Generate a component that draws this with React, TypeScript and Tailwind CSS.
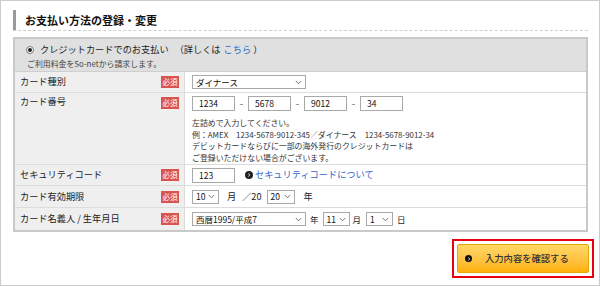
import { ReactNode } from 'react';

const Badge = () => (
  <span className="flex h-[12px] w-[18px] items-center justify-center bg-[#d9534f] text-[7.5px] leading-none text-white">
    必須
  </span>
);

const Chevron = () => (
  <svg width="7" height="5" viewBox="0 0 7 5" className="shrink-0">
    <path d="M0.8 1 L3.5 3.8 L6.2 1" fill="none" stroke="#666" strokeWidth="0.9" />
  </svg>
);

function Select({ value, w }: { value: string; w: string }) {
  return (
    <div className={`flex h-[14px] items-center justify-between border border-[#a9a9a9] bg-white pl-[3px] pr-[3px] text-[8.5px] leading-none text-[#111] ${w}`}>
      <span>{value}</span>
      <Chevron />
    </div>
  );
}

function Input({ value, w = 'w-[43px]' }: { value: string; w?: string }) {
  return (
    <div className={`flex h-[15px] items-center border border-[#a9a9a9] bg-white pl-[6px] text-[8.5px] leading-none text-[#111] ${w}`}>
      {value}
    </div>
  );
}

function Row({
  label,
  h,
  top,
  last,
  children,
}: {
  label: string;
  h: string;
  top?: boolean;
  last?: boolean;
  children: ReactNode;
}) {
  return (
    <div className={`flex ${h} ${last ? '' : 'border-b border-[#dcdcdc]'}`}>
      <div
        className={`flex w-[170px] shrink-0 justify-between border-r border-[#dcdcdc] bg-[#efefef] pl-[5px] pr-[5px] ${
          top ? 'items-start pt-[4px]' : 'items-center'
        }`}
      >
        <span className="text-[9.2px] leading-none text-[#222]">{label}</span>
        <Badge />
      </div>
      <div className={`flex flex-1 pl-[7px] ${top ? 'flex-col pt-[3px]' : 'items-center'}`}>{children}</div>
    </div>
  );
}

export default function App() {
  return (
    <div className="h-[286px] w-[600px] overflow-hidden border border-[#cccccc] bg-white font-['Noto_Sans_CJK_JP',sans-serif] text-[#222]">
      <div className="pl-[12px] pr-[11px] pt-[9px]">
        {/* title */}
        <div className="border-b border-dashed border-[#cfcfcf]">
          <div className="flex h-[20px] items-center border-l-[3px] border-[#9a9a9a] pl-[9px] text-[11px] font-bold leading-none text-[#111]">
            お支払い方法の登録・変更
          </div>
        </div>

        {/* payment box */}
        <div className="mt-[6px] border-2 border-[#c9c9c9]">
          <div className="h-[33px] border-b border-[#cfcfcf] bg-[#e0e0e0] pl-[11px] pt-[6px]">
            <div className="flex items-center text-[9.2px] leading-none text-[#222]">
              <span className="mr-[6px] flex h-[8px] w-[8px] items-center justify-center rounded-full border border-[#777] bg-white">
                <span className="h-[4px] w-[4px] rounded-full bg-[#222]" />
              </span>
              <span>クレジットカードでのお支払い</span>
              <span className="ml-[6px]">（詳しくは</span>
              <span className="ml-[3px] text-[#3366cc]">こちら</span>
              <span className="ml-[2px]">）</span>
            </div>
            <div className="mt-[6px] pl-[1px] text-[7.9px] leading-none text-[#444]">ご利用料金をSo-netから請求します。</div>
          </div>

          <Row label="カード種別" h="h-[21px]">
            <Select value="ダイナース" w="w-[114px]" />
          </Row>

          <Row label="カード番号" h="h-[72px]" top>
            <div className="flex items-center text-[8.5px] leading-none">
              <Input value="1234" />
              <span className="w-[13px] text-center">-</span>
              <Input value="5678" />
              <span className="w-[13px] text-center">-</span>
              <Input value="9012" />
              <span className="w-[13px] text-center">-</span>
              <Input value="34" />
            </div>
            <div className="mt-[6px] text-[7.9px] leading-[11.5px] text-[#333]">
              <div>左詰めで入力してください。</div>
              <div>例：AMEX　1234-5678-9012-345／ダイナース　1234-5678-9012-34</div>
              <div>デビットカードならびに一部の海外発行のクレジットカードは</div>
              <div>ご登録いただけない場合がございます。</div>
            </div>
          </Row>

          <Row label="セキュリティコード" h="h-[21px]">
            <Input value="123" />
            <span className="ml-[10px] mr-[2px] flex h-[8px] w-[8px] items-center justify-center rounded-full bg-[#222]">
              <svg width="4" height="4" viewBox="0 0 4 4">
                <path d="M1.3 0.6 L2.8 2 L1.3 3.4" fill="none" stroke="#fff" strokeWidth="0.9" />
              </svg>
            </span>
            <span className="text-[9.2px] leading-none text-[#3366cc]">セキュリティコードについて</span>
          </Row>

          <Row label="カード有効期限" h="h-[22px]">
            <Select value="10" w="w-[27px]" />
            <span className="ml-[8px] text-[9.2px] leading-none">月</span>
            <span className="ml-[6px] text-[9.2px] leading-none">／20</span>
            <Select value="20" w="w-[28px] ml-[5px]" />
            <span className="ml-[9px] text-[9.2px] leading-none">年</span>
          </Row>

          <Row label="カード名義人 / 生年月日" h="h-[22px]" last>
            <Select value="西暦1995/平成7" w="w-[114px]" />
            <span className="ml-[4px] text-[8.5px] leading-none">年</span>
            <Select value="11" w="w-[27px] ml-[4px]" />
            <span className="ml-[3px] text-[8.5px] leading-none">月</span>
            <Select value="1" w="w-[27px] ml-[5px]" />
            <span className="ml-[4px] text-[8.5px] leading-none">日</span>
          </Row>
        </div>

        {/* confirm button */}
        <div className="mt-[7px] flex justify-end">
          <div className="-mr-[6px] border-2 border-[#e60012] p-[3px]">
            <div className="flex h-[29px] w-[132px] items-center rounded-[2px] border border-[#e6a800] bg-gradient-to-b from-[#ffd966] to-[#ffb000] pl-[7px]">
              <span className="flex h-[7px] w-[7px] items-center justify-center rounded-full bg-[#111]">
                <svg width="4" height="4" viewBox="0 0 4 4">
                  <path d="M1.3 0.6 L2.8 2 L1.3 3.4" fill="none" stroke="#fff" strokeWidth="0.9" />
                </svg>
              </span>
              <span className="ml-[13px] text-[9.3px] font-medium leading-none text-[#333]">入力内容を確認する</span>
            </div>
          </div>
        </div>
      </div>
    </div>
  );
}
